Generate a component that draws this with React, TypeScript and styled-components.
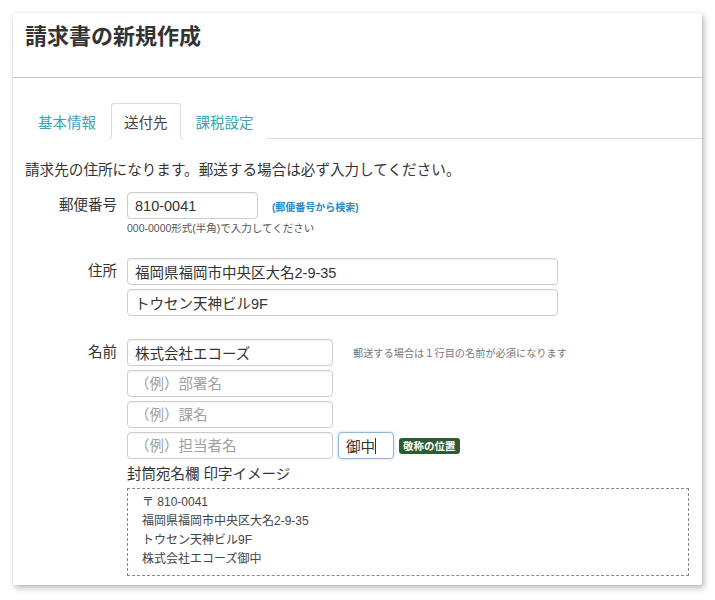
import styled, { createGlobalStyle, css } from 'styled-components'

const GlobalStyle = createGlobalStyle`
    html, body {
        margin: 0;
        padding: 0;
        background: #fff;
    }
    body {
        font-family: 'Liberation Sans', 'Noto Sans CJK JP', sans-serif;
        color: #333;
    }
`

const tabs = ['基本情報', '送付先', '課税設定']
const nameLines = ['（例）部署名', '（例）課名', '（例）担当者名']
const preview = ['〒 810-0041', '福岡県福岡市中央区大名2-9-35', 'トウセン天神ビル9F', '株式会社エコーズ御中']

export default function App() {
    return (
        <Page>
            <GlobalStyle />
            <Card>
                <Header>
                    <Title>請求書の新規作成</Title>
                </Header>
                <Body>
                    <TabBar>
                        {tabs.map((t) => (
                            <Tab key={t} $active={t === '送付先'}>{t}</Tab>
                        ))}
                    </TabBar>

                    <Lead>請求先の住所になります。郵送する場合は必ず入力してください。</Lead>

                    <FormRow $top={12}>
                        <Label>郵便番号</Label>
                        <Field>
                            <Inline>
                                <Input $w={131} defaultValue="810-0041" />
                                <SearchLink href="#">(郵便番号から検索)</SearchLink>
                            </Inline>
                            <Help>000-0000形式(半角)で入力してください</Help>
                        </Field>
                    </FormRow>

                    <FormRow $top={23}>
                        <Label>住所</Label>
                        <Stack>
                            <Input $w={431} defaultValue="福岡県福岡市中央区大名2-9-35" />
                            <Input $w={431} defaultValue="トウセン天神ビル9F" />
                        </Stack>
                    </FormRow>

                    <FormRow $top={23}>
                        <Label>名前</Label>
                        <Stack>
                            <Inline>
                                <Input $w={206} defaultValue="株式会社エコーズ" />
                                <NameNote>郵送する場合は１行目の名前が必須になります</NameNote>
                            </Inline>
                            {nameLines.map((p, i) => (
                                <Inline key={p}>
                                    <Input $w={206} placeholder={p} />
                                    {i === nameLines.length - 1 && (
                                        <>
                                            <HonorificWrap>
                                                <Input $w={56} $focused defaultValue="御中" />
                                                <Caret />
                                            </HonorificWrap>
                                            <Badge>敬称の位置</Badge>
                                        </>
                                    )}
                                </Inline>
                            ))}
                            <PreviewTitle>封筒宛名欄 印字イメージ</PreviewTitle>
                            <Preview>
                                {preview.map((line) => (
                                    <PreviewLine key={line}>{line}</PreviewLine>
                                ))}
                            </Preview>
                        </Stack>
                    </FormRow>
                </Body>
            </Card>
        </Page>
    )
}

const Page = styled.div`
    padding: 13px 0 0 13px;
    height: 587px;
`

const Card = styled.div`
    width: 689px;
    height: 572px;
    background: #fff;
    border-radius: 2px;
    box-shadow: 0 0 2px rgba(0, 0, 0, 0.12), 2px 3px 6px rgba(0, 0, 0, 0.28);
    display: flex;
    flex-direction: column;
`

const Header = styled.div`
    height: 65px;
    box-sizing: border-box;
    padding: 6px 12px 0;
    border-bottom: 1px solid #c9c9c9;
`

const Title = styled.h1`
    margin: 0;
    font-family: 'Noto Sans CJK JP', sans-serif;
    font-size: 22px;
    line-height: 30px;
    font-weight: 700;
    color: #333;
`

const Body = styled.div`
    padding: 25px 0 0 12px;
`

const TabBar = styled.div`
    display: flex;
    border-bottom: 1px solid #dcdcdc;
    height: 35px;
`

const Tab = styled.div<{ $active?: boolean }>`
    box-sizing: border-box;
    height: 36px;
    padding: 0 12px;
    display: flex;
    align-items: center;
    font-size: 14.5px;
    color: ${(p) => (p.$active ? '#444' : '#3fa2b4')};
    background: #fff;
    border: 1px solid ${(p) => (p.$active ? '#dcdcdc' : 'transparent')};
    border-bottom-color: ${(p) => (p.$active ? '#fff' : 'transparent')};
    border-radius: 3px 3px 0 0;
    margin-right: 2px;
`

const Lead = styled.p`
    margin: 21px 0 0;
    font-size: 14.6px;
    line-height: 20px;
    color: #333;
`

const FormRow = styled.div<{ $top: number }>`
    display: grid;
    grid-template-columns: 92px 1fr;
    column-gap: 10px;
    margin-top: ${(p) => p.$top}px;
`

const Label = styled.div`
    text-align: right;
    font-size: 14.5px;
    line-height: 26px;
    color: #333;
`

const Field = styled.div`
    display: flex;
    flex-direction: column;
`

const Stack = styled.div`
    display: flex;
    flex-direction: column;
    gap: 4px;
`

const Inline = styled.div`
    display: flex;
    align-items: center;
`

const Input = styled.input<{ $w: number; $focused?: boolean }>`
    box-sizing: border-box;
    width: ${(p) => p.$w}px;
    height: 27px;
    padding: 0 7px;
    border: 1px solid #cdcdcd;
    border-radius: 4px;
    background: #fff;
    box-shadow: inset 0 1px 1px rgba(0, 0, 0, 0.05);
    font-family: 'Liberation Sans', 'Noto Sans CJK JP', sans-serif;
    font-size: 14.5px;
    color: #333;
    outline: none;

    &::placeholder {
        color: #a0a0a0;
    }

    ${(p) =>
        p.$focused &&
        css`
            border-color: #8fb8dc;
            box-shadow: 0 0 3px rgba(82, 150, 210, 0.45);
        `}
`

const HonorificWrap = styled.div`
    position: relative;
    margin-left: 5px;
    display: flex;
`

const Caret = styled.span`
    position: absolute;
    left: 37px;
    top: 6px;
    width: 1px;
    height: 16px;
    background: #333;
`

const SearchLink = styled.a`
    margin-left: 14px;
    font-size: 10px;
    font-weight: 700;
    color: #2b88c9;
    text-decoration: none;
    padding-top: 2px;
`

const Help = styled.div`
    margin-top: 2px;
    font-size: 10.5px;
    line-height: 14px;
    color: #555;
`

const NameNote = styled.span`
    margin-left: 20px;
    font-size: 10.2px;
    color: #777;
`

const Badge = styled.span`
    margin-left: 5px;
    height: 16px;
    padding: 0 4px;
    display: inline-flex;
    align-items: center;
    border-radius: 3px;
    background: #2e5c2f;
    color: #fff;
    font-family: 'Noto Sans CJK JP', sans-serif;
    font-size: 10.5px;
    font-weight: 700;
`

const PreviewTitle = styled.div`
    margin-top: 1px;
    font-size: 14.5px;
    line-height: 20px;
    color: #333;
`

const Preview = styled.div`
    width: 562px;
    box-sizing: border-box;
    padding: 4px 14px 6px;
    border: 1px dashed #8a8a8a;
`

const PreviewLine = styled.div`
    font-size: 12px;
    line-height: 19px;
    color: #444;
`
